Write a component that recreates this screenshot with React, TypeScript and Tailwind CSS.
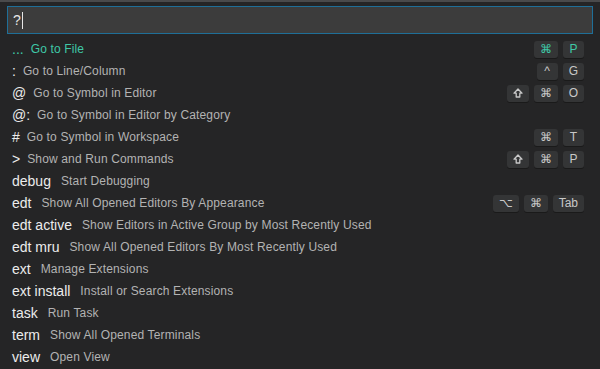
const rows: { label: string; desc: string; keys?: string[]; active?: boolean; word?: boolean }[] = [
  { label: "...", desc: "Go to File", keys: ["⌘", "P"], active: true },
  { label: ":", desc: "Go to Line/Column", keys: ["^", "G"] },
  { label: "@", desc: "Go to Symbol in Editor", keys: ["⇧", "⌘", "O"] },
  { label: "@:", desc: "Go to Symbol in Editor by Category" },
  { label: "#", desc: "Go to Symbol in Workspace", keys: ["⌘", "T"] },
  { label: ">", desc: "Show and Run Commands", keys: ["⇧", "⌘", "P"] },
  { label: "debug", desc: "Start Debugging", word: true },
  { label: "edt", desc: "Show All Opened Editors By Appearance", keys: ["⌥", "⌘", "Tab"], word: true },
  { label: "edt active", desc: "Show Editors in Active Group by Most Recently Used", word: true },
  { label: "edt mru", desc: "Show All Opened Editors By Most Recently Used", word: true },
  { label: "ext", desc: "Manage Extensions", word: true },
  { label: "ext install", desc: "Install or Search Extensions", word: true },
  { label: "task", desc: "Run Task", word: true },
  { label: "term", desc: "Show All Opened Terminals", word: true },
  { label: "view", desc: "Open View", word: true },
];

function Key({ k, active }: { k: string; active?: boolean }) {
  return (
    <span
      className={`flex h-[17px] items-center justify-center rounded-[3px] bg-[#343536] px-[6px] text-[12px] leading-none shadow-[0_1px_0_#1a1a1a] ${
        k === "Tab" ? "min-w-[31px]" : "min-w-[21px]"
      } ${active ? "text-[#3fc8a6]" : "text-[#c8c8c8]"}`}
    >
      {k === "⇧" ? (
        <svg width="10" height="10" viewBox="0 0 10 10" fill="none" stroke="currentColor" strokeWidth="1.3">
          <path d="M5 1 L9 5.2 H6.8 V9 H3.2 V5.2 H1 Z" strokeLinejoin="round" />
        </svg>
      ) : (
        k
      )}
    </span>
  );
}

export default function App() {
  return (
    <div
      className="h-[369px] w-[600px] overflow-hidden border-t-2 border-[#4a4a4b] bg-[#252526]"
      style={{ fontFamily: '"Liberation Sans", Arial, sans-serif' }}
    >
      <div className="px-[7px] pt-[4px]">
        <div className="flex h-[28px] items-center border border-[#1f6f98] bg-[#3c3c3c] pl-[5px]">
          <span className="text-[14px] text-[#e6e6e6]">?</span>
          <span className="ml-[1px] h-[17px] w-[1px] bg-[#e6e6e6]" />
        </div>
        <div className="mt-[4px]">
          {rows.map((r) => (
            <div key={r.label} className="flex h-[22px] items-center pl-[5px] pr-[9px]">
              <span
                className={`text-[14px] ${r.active ? "text-[#3fc8a6]" : "text-[#ececec]"} ${
                  r.word ? "mr-[10px]" : "mr-[7px]"
                }`}
              >
                {r.label}
              </span>
              <span className={`text-[12px] tracking-[0.15px] ${r.active ? "text-[#3fc8a6]" : "text-[#b3b3b3]"}`}>
                {r.desc}
              </span>
              {r.keys && (
                <div className="ml-auto flex gap-[5px]">
                  {r.keys.map((k, i) => (
                    <Key key={i} k={k} active={r.active} />
                  ))}
                </div>
              )}
            </div>
          ))}
        </div>
      </div>
    </div>
  );
}
